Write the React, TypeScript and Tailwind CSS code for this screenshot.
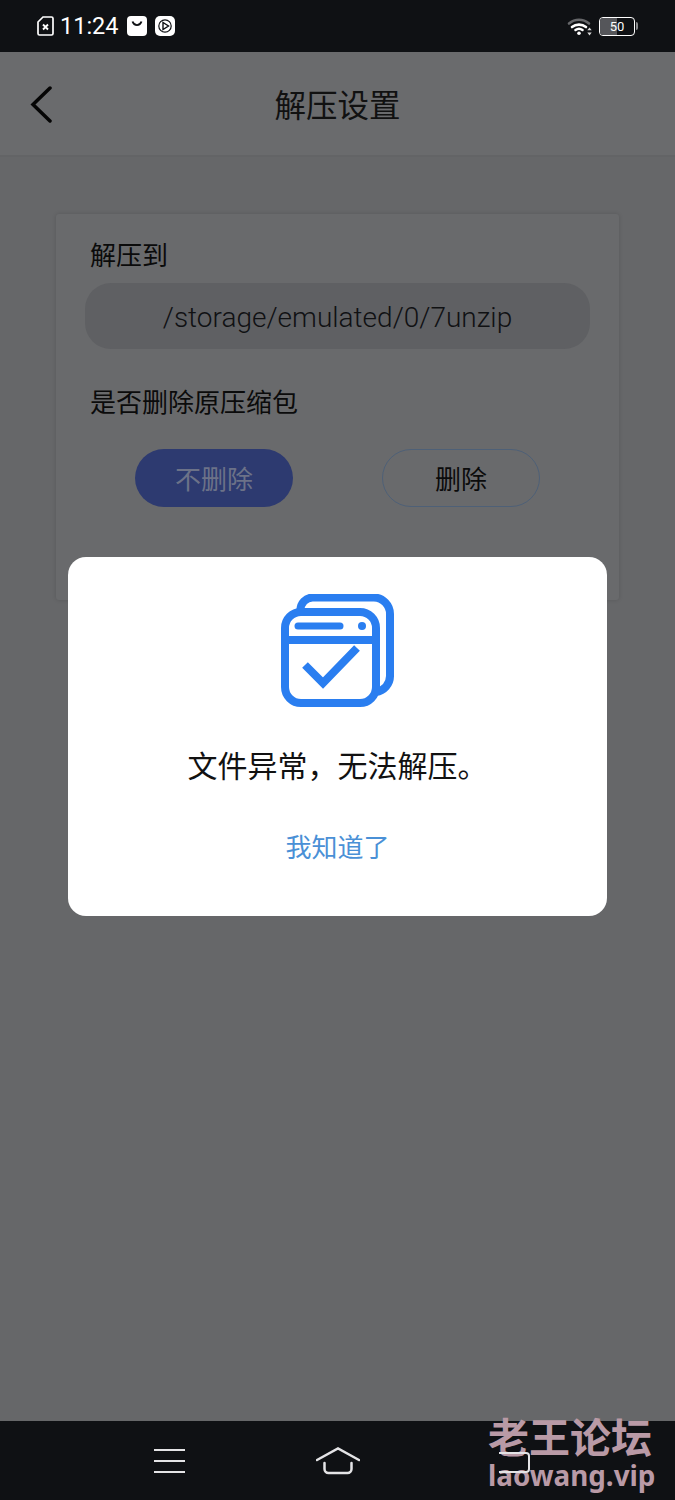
const cjk = 'font-["Noto_Sans_CJK_SC","Noto_Sans",sans-serif]';

function FileErrorIcon() {
  return (
    <svg width="17" height="20" viewBox="0 0 17 20" fill="none" stroke="white">
      <path d="M6 1H14.500a1.500 1.500 0 0 1 1.500 1.500v15a1.500 1.500 0 0 1-1.500 1.500h-12A1.500 1.500 0 0 1 1 17.500V6z" strokeWidth="1.700" />
      <path d="M6 8.500l5 5M11 8.500l-5 5" strokeWidth="1.900" />
    </svg>
  );
}

function MailIcon() {
  return (
    <svg width="20" height="20" viewBox="0 0 20 20">
      <rect width="20" height="20" rx="4" fill="white" />
      <path d="M5.500 5.500c1 2.800 2.600 3.600 4.500 3.600s3.500-.8 4.500-3.600" fill="none" stroke="#0f1114" strokeWidth="1.900" />
    </svg>
  );
}

function PlayIcon() {
  return (
    <svg width="20" height="20" viewBox="0 0 20 20">
      <rect width="20" height="20" rx="5" fill="white" />
      <circle cx="10" cy="10" r="6.200" fill="none" stroke="#0f1114" strokeWidth="1.200" />
      <path d="M8 6.500v7l5.500-3.500z" fill="none" stroke="#0f1114" strokeWidth="1.400" />
    </svg>
  );
}

function WifiIcon() {
  return (
    <svg width="26" height="19" viewBox="0 0 26 19" fill="none" strokeLinecap="round">
      <path d="M2 6.500C8 1.500 16 1.500 22 6.500" stroke="#66676a" strokeWidth="2.600" />
      <path d="M5 10C9 6.800 15 6.800 19 10" stroke="white" strokeWidth="2.600" />
      <path d="M8.500 13c2.500-1.800 4.500-1.800 7 0" stroke="white" strokeWidth="2.600" />
      <circle cx="12" cy="16.200" r="1.800" fill="white" />
      <path d="M22.500 10.500l2.200 2.800h-4.400zM22.500 18.500l2.200-3h-4.400z" fill="#d8d8d8" />
    </svg>
  );
}

function Battery() {
  return (
    <div className="flex items-center">
      <div className="relative flex h-[19px] w-[36px] items-center justify-center overflow-hidden rounded-[4px] border-[1.5px] border-white">
        <div className="absolute inset-y-0 left-0 w-1/2 bg-[#55565a]" />
        <span className="relative font-['Roboto',sans-serif] text-[13px] leading-none text-white">50</span>
      </div>
      <div className="ml-[1px] h-[8px] w-[2px] rounded-r-sm bg-[#8a8b8d]" />
    </div>
  );
}

function DialogIcon() {
  return (
    <svg width="113" height="113" viewBox="0 0 113 113" fill="none" stroke="#2a7ef0" strokeWidth="8">
      <path d="M19.500 16a12.500 12.500 0 0 1 12-12.500H93A16.500 16.500 0 0 1 109 20V82A16 16 0 0 1 95 98" />
      <rect x="4" y="18" width="91" height="91" rx="16" fill="white" />
      <path d="M4 46H95" />
      <path d="M17 32H59" strokeWidth="7" strokeLinecap="round" />
      <circle cx="81" cy="32" r="4" fill="#2a7ef0" stroke="none" />
      <path d="M24 71l18 18 34-35" strokeWidth="8" />
    </svg>
  );
}

export default function App() {
  return (
    <div className={`relative flex h-[1500px] w-[675px] flex-col overflow-hidden bg-[#666769] ${cjk}`}>
      <div className="flex h-[52px] items-center justify-between bg-[#0f1114] pl-[37px] pr-[37px]">
        <div className="flex items-center">
          <FileErrorIcon />
          <span className="ml-[6px] pt-[1px] font-['Roboto',sans-serif] text-[23.5px] leading-none text-white">11:24</span>
          <div className="ml-[8px]"><MailIcon /></div>
          <div className="ml-[8px]"><PlayIcon /></div>
        </div>
        <div className="flex items-center gap-[6px]">
          <WifiIcon />
          <Battery />
        </div>
      </div>

      <div className="relative flex h-[105px] items-center justify-center border-b-[2px] border-[#636466] bg-[#6a6b6d]">
        <svg className="absolute left-[29px] top-[33px]" width="24" height="38" viewBox="0 0 24 38" fill="none" stroke="#050505" strokeWidth="3.500" strokeLinecap="round">
          <path d="M21 3L4 19.500 21 36" />
        </svg>
        <span className="pt-[1px] text-[31.5px] leading-none text-[#111]">解压设置</span>
      </div>

      <div className="mx-[56px] mt-[57px] flex h-[386px] flex-col rounded-[3px] bg-[#696a6c] px-[29px] pt-[25px] shadow-[0_0_4px_rgba(0,0,0,0.14)]">
        <span className="pl-[5px] text-[26px] leading-[30px] text-[#0b0b0b]">解压到</span>
        <div className="mt-[14px] flex h-[66px] items-center justify-center rounded-[26px] bg-[#5f6063] pt-[3px] font-['Roboto',sans-serif] text-[28px] font-light text-[#101113]">
          /storage/emulated/0/7unzip
        </div>
        <span className="mt-[37px] pl-[5px] text-[26px] leading-[30px] text-[#0b0b0b]">是否删除原压缩包</span>
        <div className="mt-[33px] flex justify-between px-[50px]">
          <div className="flex h-[58px] w-[158px] items-center justify-center rounded-[29px] bg-[#2d3a70] pb-[1px] text-[26px] text-[#6c7288]">不删除</div>
          <div className="flex h-[58px] w-[158px] items-center justify-center rounded-[29px] border border-[#4e6077] pb-[1px] text-[26px] text-[#0b0b0b]">删除</div>
        </div>
      </div>

      <div className="flex-1" />

      <div className="flex h-[79px] items-center bg-[#0f1114]">
        <div className="ml-[154px] flex w-[31px] flex-col gap-[9px]">
          <div className="h-[2px] bg-[#e4e4e6]" />
          <div className="h-[2px] bg-[#e4e4e6]" />
          <div className="h-[2px] bg-[#e4e4e6]" />
        </div>
        <svg className="ml-[131px]" width="44" height="28" viewBox="0 0 44 28" fill="none" stroke="#e4e4e6" strokeWidth="2.500" strokeLinecap="round">
          <path d="M1 13L22 1.500 43 13" />
          <path d="M8.500 16v6a4 4 0 0 0 4 4h19a4 4 0 0 0 4-4v-6" />
        </svg>
        <div className="relative z-10 ml-[139px] mt-[3px] h-[21px] w-[31px] rounded-r-[4px] border-2 border-l-0 border-[#e4e4e6]" />
      </div>

      <div className="absolute left-[68px] top-[557px] flex h-[359px] w-[539px] flex-col items-center rounded-[18px] bg-white pt-[37px]">
        <DialogIcon />
        <span className="mt-[37px] text-[30px] leading-[40px] text-[#111]">文件异常，无法解压。</span>
        <span className="mt-[44px] text-[26px] leading-[36px] text-[#4a90d6]">我知道了</span>
      </div>

      <div className="absolute left-[488px] top-[1412px] flex flex-col items-start font-bold text-[#b99aa6]">
        <span className="text-[41px] leading-[46px]">老王论坛</span>
        <span className="font-['Noto_Sans',sans-serif] text-[27.8px] leading-[34px]">laowang.vip</span>
      </div>
    </div>
  );
}
